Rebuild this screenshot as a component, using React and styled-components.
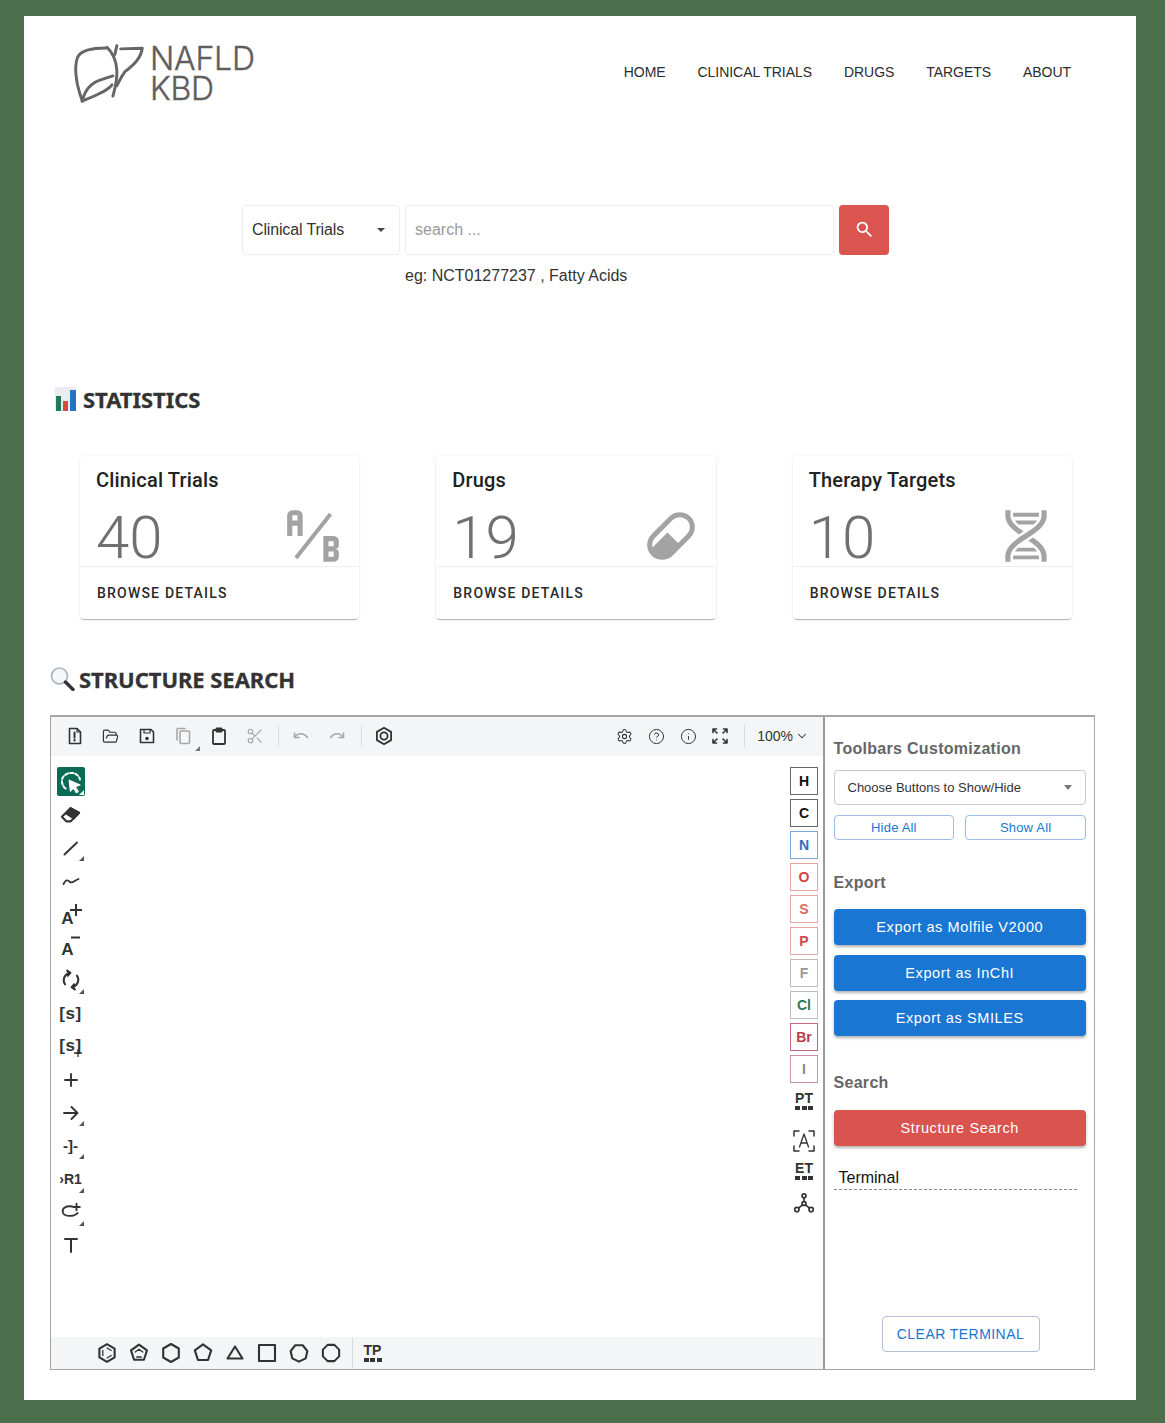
import React from "react";
import styled, { createGlobalStyle } from "styled-components";
import { Settings, CircleHelp, Info, ChevronDown, Scissors, FolderOpen } from "lucide-react";

const Global = createGlobalStyle`
  html, body { margin: 0; padding: 0; background: #4a6f4a; }
  * { box-sizing: border-box; }
  body { font-family: "Liberation Sans", Arial, sans-serif; }
`;

const Backdrop = styled.div`
  width: 1165px; height: 1423px; padding: 16px 29px 23px 24px; background: #4a6f4a;
`;
const Sheet = styled.div`
  width: 1112px; height: 1384px; background: #fff; padding-top: 29px; overflow: hidden;
`;
const Header = styled.header`
  display: flex; align-items: center; justify-content: space-between;
  height: 58px; padding: 0 65px 0 49px;
`;
const Brand = styled.div`display: flex; align-items: center; gap: 5px; color: #666;`;
const BrandText = styled.div`
  font-family: Inter, sans-serif; font-weight: 300; font-size: 32px; line-height: 30px; color: #5e5e5e;
  letter-spacing: -0.2px; -webkit-text-stroke: 0.4px #5e5e5e;
`;
const Nav = styled.nav`display: flex; gap: 32px; margin-bottom: 4px;`;
const NavLink = styled.a`font-size: 14px; line-height: 20px; color: #2c2c2c; letter-spacing: -0.05px;`;

const SearchRow = styled.div`
  display: flex; gap: 5.5px; margin: 102px 0 0 218px; height: 49.5px;
`;
const Picker = styled.div`
  width: 157.5px; display: flex; align-items: center; justify-content: space-between;
  padding: 0 14px 0 9px; border: 1.5px solid #eee; border-radius: 4px; font-size: 16px; color: #333; letter-spacing: -0.15px;
  box-shadow: 0 0 2px rgba(0,0,0,.04);
`;
const Caret = styled.span`
  width: 0; height: 0; border-left: 4.5px solid transparent; border-right: 4.5px solid transparent;
  border-top: ${p => p.$h || 4}px solid ${p => p.$c || "#444"};
`;
const SearchInput = styled.div`
  width: 428.5px; display: flex; align-items: center; padding-left: 9px;
  border: 1.5px solid #eee; border-radius: 4px; font-size: 16px; color: #9a9a9a;
  box-shadow: 0 0 2px rgba(0,0,0,.04);
`;
const SearchButton = styled.button`
  width: 50px; border: 0; border-radius: 4px; background: #da5450; color: #fff;
  display: flex; align-items: center; justify-content: center; padding: 0;
`;
const Hint = styled.div`
  margin: 11px 0 0 381px; font-size: 16px; line-height: 20px; color: #333;
`;
const SectionTitle = styled.h2`
  display: flex; align-items: center; margin: ${p => p.$top}px 0 0 ${p => p.$left}px; height: 30px;
  gap: ${p => p.$gap}px; font-family: "Noto Sans", sans-serif; font-weight: 700; font-size: 22px; color: #333;
  letter-spacing: -0.05px; -webkit-text-stroke: 0.3px #333;
`;
const CardGrid = styled.div`
  display: grid; grid-template-columns: repeat(3, 1fr); gap: 77px; margin: 42px 64px 0 56px;
`;
const Card = styled.article`
  height: 163px; border-radius: 4px; background: #fff; font-family: Roboto, sans-serif;
  box-shadow: 0 2px 1px -1px rgba(0,0,0,.22), 0 1px 2px rgba(0,0,0,.1), 0 0 3px rgba(0,0,0,.06);
`;
const CardTitle = styled.div`
  padding: 8px 16px 0; font-size: 20px; line-height: 32px; font-weight: 500; color: #222; letter-spacing: 0.17px;
`;
const CardBody = styled.div`
  height: 71px; padding: 11px 15px 0 16px; display: flex; align-items: center; justify-content: space-between;
  border-bottom: 1px solid #eee; color: #a3a3a3;
`;
const CardValue = styled.div`font-size: 60px; line-height: 60px; padding-top: 3px; font-weight: 300; color: #707070;`;
const CardFooter = styled.div`
  height: 52px; padding: 0 17px; display: flex; align-items: center; font-size: 14px; font-weight: 500;
  letter-spacing: 1.2px; color: #2a2a2a;
`;

const Frame = styled.section`
  display: grid; grid-template-columns: 774px 1fr; height: 655px; margin: 21px 41.5px 0 26px;
  border: 1.5px solid #a6a6a6; border-top-width: 2px;
`;
const Editor = styled.div`
  display: flex; flex-direction: column; border-right: 2px solid #9a9a9a; min-width: 0;
`;
const TopBar = styled.div`
  height: 39.5px; flex: none; display: flex; align-items: center; padding: 0 14px 0 5.5px; background: #f4f5f6; color: #333;
`;
const TopButton = styled.span`
  position: relative; width: ${p => p.$w || 36}px; height: 32px; display: flex; align-items: center; justify-content: center;
  color: ${p => p.$dim ? "#a8a8a8" : "#333"};
`;
const Rule = styled.span`
  width: 1px; height: ${p => p.$h || 22}px; background: #d8dadc; margin: 0 ${p => p.$r}px 0 ${p => p.$l}px; flex: none;
`;
const Push = styled.span`flex: 1;`;
const Zoom = styled.span`
  display: flex; align-items: center; gap: 2px; font-size: 14px; color: #333;
`;
const Canvas = styled.div`flex: 1; display: flex; justify-content: space-between; padding: 11px 5px 0 5.5px;`;
const LeftRail = styled.div`display: flex; flex-direction: column; gap: 4.14px;`;
const Tool = styled.span`
  position: relative; width: 28px; height: 29px; display: flex; align-items: center; justify-content: center;
  border-radius: 2px; color: ${p => p.$on ? "#fff" : "#333"}; background: ${p => p.$on ? "#0b6b56" : "transparent"};
`;
const Corner = styled.i`
  position: absolute; right: 1px; bottom: 1px; width: 0; height: 0;
  border-left: 5px solid transparent; border-bottom: 5px solid ${p => p.$c || "#555"};
`;
const ToolText = styled.span`
  font-weight: 700; font-size: ${p => p.$s || 15}px; line-height: 1; color: #333; white-space: nowrap;
  letter-spacing: ${p => p.$sp || 0}px; transform: translate(${p => p.$dx || 0}px, ${p => p.$dy || 0}px);
`;
const Mark = styled.svg`
  position: absolute; left: ${p => p.$x}px; top: ${p => p.$y}px; stroke: #333; stroke-width: 2; fill: none;
`;
const RightRail = styled.div`display: flex; flex-direction: column; gap: 4px; width: 28px;`;
const Atom = styled.span`
  width: 28px; height: 28px; display: flex; align-items: center; justify-content: center;
  border: 1.5px solid ${p => p.$line}; font-size: 14px; font-weight: 700; color: ${p => p.$ink};
`;
const Table = styled.span`
  width: 28px; height: 28px; margin-top: ${p => p.$mt || 0}px; display: flex; flex-direction: column; align-items: center; justify-content: center;
  font-size: 14px; font-weight: 700; line-height: 12px; color: #333;
`;
const Dots = styled.span`display: flex; gap: 1.5px; margin-top: 2px;`;
const Dot = styled.i`width: 5px; height: 4px; background: #333;`;
const Slot = styled.span`
  width: 28px; height: 28px; margin-top: ${p => p.$mt || 0}px; display: flex; align-items: center; justify-content: center; color: #333;
`;
const BottomBar = styled.div`
  height: 32px; flex: none; display: flex; align-items: center; padding-left: 39.5px; background: #f4f5f6; color: #333;
`;
const Shape = styled.span`width: 32px; height: 32px; display: flex; align-items: center; justify-content: center;`;

const Panel = styled.aside`
  display: flex; flex-direction: column; padding: 22px 7.5px 17px 8.5px; min-width: 0;
`;
const PanelHead = styled.h3`
  margin: ${p => p.$top}px 0 0; font-size: 16px; line-height: 20px; font-weight: 700; color: #666; letter-spacing: .3px;
`;
const PanelSelect = styled.div`
  margin-top: 11px; height: 35px; padding: 0 13px; display: flex; align-items: center; justify-content: space-between;
  border: 1px solid #c9c9c9; border-radius: 4px; font-size: 13px; color: #333;
`;
const Pair = styled.div`display: grid; grid-template-columns: 1fr 1fr; gap: 11px; margin-top: 10px;`;
const Ghost = styled.button`
  height: 25px; padding: 0; background: #fff; border: 1px solid #9dbde2; border-radius: 4px;
  font: 13px "Liberation Sans", sans-serif; color: #1976d2; letter-spacing: .2px;
`;
const Solid = styled.button`
  height: 36px; padding: 0; margin-top: ${p => p.$top}px; border: 0; border-radius: 4px; background: ${p => p.$bg};
  box-shadow: 0 2px 3px rgba(0,0,0,.3); color: #fff; font: 14.5px "Liberation Sans", sans-serif; letter-spacing: .6px;
`;
const Terminal = styled.div`
  margin: 22px 9px 0 0; padding: 0 0 1px 5px; border-bottom: 1px dashed #8a8a8a; font-size: 16px; line-height: 20px; color: #111;
`;
const Clear = styled.button`
  margin: auto 0 0 48px; width: 158px; height: 36px; padding: 0; background: #fff; border: 1px solid #b3c0d8; border-radius: 4px;
  font: 14px "Liberation Sans", sans-serif; color: #1976d2; letter-spacing: .45px;
`;
const Glyph = styled.svg`
  display: block; fill: none; stroke: currentColor; stroke-width: ${p => p.$w || 1.6}; stroke-linecap: round; stroke-linejoin: round; flex: none;
`;
const Mono = styled.svg`display: block; fill: currentColor; flex: none;`;

const G = ({ s = 20, w, children }) => <Glyph width={s} height={s} viewBox="0 0 20 20" $w={w}>{children}</Glyph>;
const PlusMark = ({ x, y, s = 12 }) => (
  <Mark $x={x} $y={y} width={s} height={s} viewBox="0 0 12 12"><path d="M6 0V12M0 6H12" /></Mark>
);
const MinusMark = ({ x, y }) => (
  <Mark $x={x} $y={y} width="9" height="3" viewBox="0 0 9 3"><path d="M0 1.5H9" /></Mark>
);

const Logo = () => (
  <Glyph width="72" height="60" viewBox="216 130 220 184" $w={9}>
    <path d="M318 142C280 142 240 148 230 170C218 200 226 250 236 280L244 305" />
    <path d="M244 305C252 270 270 250 300 240L338 228" />
    <path d="M244 305C280 290 320 275 335 255" />
    <path d="M320 140C335 155 348 180 350 210C352 240 345 265 338 290" />
    <path d="M350 135L344 162" />
    <path d="M362 145L428 143C424 175 400 195 375 215C360 235 355 250 350 258" />
  </Glyph>
);
const Chart = () => (
  <svg width="21" height="24" viewBox="0 0 21 24">
    <rect width="21" height="24" fill="#e9edf1" />
    <rect x="1" y="9" width="5" height="15" fill="#1f7a57" />
    <rect x="8" y="14" width="5" height="10" fill="#d8483f" />
    <rect x="15" y="3" width="6" height="21" fill="#2673c2" />
  </svg>
);
const Lens = () => (
  <svg width="25" height="24" viewBox="0 0 25 24">
    <circle cx="9.5" cy="9" r="8" fill="#f3f7fa" stroke="#a9b3ba" strokeWidth="1.6" />
    <path d="M15.5 15L23 22.5" stroke="#333" strokeWidth="3.4" strokeLinecap="round" />
  </svg>
);
const Magnify = () => (
  <Mono width="21" height="21" viewBox="0 0 24 24">
    <path d="M9.5,3A6.5,6.5 0 0,1 16,9.5C16,11.11 15.41,12.59 14.44,13.73L14.71,14H15.5L20.5,19L19,20.5L14,15.5V14.71L13.73,14.44C12.59,15.41 11.11,16 9.5,16A6.5,6.5 0 0,1 3,9.5A6.5,6.5 0 0,1 9.5,3M9.5,5C7,5 5,7 5,9.5C5,12 7,14 9.5,14C12,14 14,12 14,9.5C14,7 12,5 9.5,5Z" />
  </Mono>
);
const AB = () => (
  <Mono width="62" height="62" viewBox="0 0 24 24">
    <path d="M4 2A2 2 0 0 0 2 4V12H4V8H6V12H8V4A2 2 0 0 0 6 2H4M4 4H6V6H4M16 12V22H20A2 2 0 0 0 22 20V18.5A1.5 1.5 0 0 0 20.5 17A1.5 1.5 0 0 0 22 15.5V14A2 2 0 0 0 20 12H16M18 14H20V16H18M18 18H20V20H18ZM18.2 3L19.4 4L6 21L4.8 20Z" />
  </Mono>
);
const Pill = () => (
  <Mono width="60" height="60" viewBox="0 0 24 24">
    <path d="M4.22,11.29L11.29,4.22C13.64,1.88 17.43,1.88 19.78,4.22C22.12,6.56 22.12,10.36 19.78,12.71L12.71,19.78C10.36,22.12 6.56,22.12 4.22,19.78C1.88,17.43 1.88,13.64 4.22,11.29M5.64,12.71C4.59,13.75 4.24,15.24 4.6,16.57L10.59,10.59L14.83,14.83L18.36,11.29C19.93,9.73 19.93,7.2 18.36,5.64C16.8,4.07 14.27,4.07 12.71,5.64L5.64,12.71Z" />
  </Mono>
);
const Dna = () => (
  <Mono width="62" height="62" viewBox="0 0 24 24">
    <path d="M4,2H6V4C6,5.44 6.68,6.61 7.88,7.78C8.74,8.61 9.89,9.41 11.09,10.2L9.26,11.39C8.27,10.72 7.31,10 6.5,9.21C5.07,7.82 4,6.1 4,4V2M18,2H20V4C20,6.1 18.93,7.82 17.5,9.21C16.09,10.59 14.29,11.73 12.54,12.84C10.79,13.96 9.09,15.05 7.88,16.22C6.68,17.39 6,18.56 6,20V22H4V20C4,17.9 5.07,16.18 6.5,14.79C7.91,13.41 9.71,12.27 11.46,11.16C13.21,10.04 14.91,8.95 16.12,7.78C17.32,6.61 18,5.44 18,4V2M14.74,12.61C15.73,13.28 16.69,14 17.5,14.79C18.93,16.18 20,17.9 20,20V22H18V20C18,18.56 17.32,17.39 16.12,16.22C15.26,15.39 14.11,14.59 12.91,13.8L14.74,12.61M7,3H17V4L16.94,4.5H7.06L7,4V3M7.68,6H16.32C16.08,6.34 15.8,6.69 15.42,7.06L14.91,7.5H9.07L8.56,7.06C8.2,6.69 7.92,6.34 7.68,6M9.09,16.5H14.93L15.44,16.94C15.8,17.31 16.08,17.66 16.32,18H7.68C7.92,17.66 8.2,17.31 8.56,16.94L9.09,16.5M7.06,19.5H16.94L17,20V21H7V20L7.06,19.5Z" />
  </Mono>
);

const poly = (n, r, rot = -90, c = 10) =>
  Array.from({ length: n }, (_, i) => {
    const a = ((rot + (360 / n) * i) * Math.PI) / 180;
    return `${(c + r * Math.cos(a)).toFixed(2)},${(c + r * Math.sin(a)).toFixed(2)}`;
  }).join(" ");

const shapes = [
  <G w={2.1}><polygon points={poly(6, 8.8)} /><path d="M5.8 7.5V12.5M14.2 7.5L10 5M14.2 12.5L10 15" strokeWidth="1.3" /></G>,
  <G w={2.1}><polygon points={poly(5, 8.4)} /><path d="M6.2 9L10 6.2L13.8 9M7.7 14H12.3" strokeWidth="1.3" /></G>,
  <G w={2.1}><polygon points={poly(6, 9)} /></G>,
  <G w={2.1}><polygon points={poly(5, 8.6)} /></G>,
  <G w={2.1}><polygon points="10,3.5 17.5,15.5 2.5,15.5" /></G>,
  <G w={2.1}><rect x="2" y="2" width="16" height="16" /></G>,
  <G w={2.1}><polygon points={poly(7, 8.6, 90)} /></G>,
  <G w={2.1}><polygon points={poly(8, 8.8, 22.5)} /></G>,
];

const atoms = [
  ["H", "#666", "#111"], ["C", "#666", "#111"], ["N", "#7fa8e2", "#2f6fc4"], ["O", "#e9a5a0", "#cf4540"],
  ["S", "#e9a9a0", "#d96a5c"], ["P", "#e9a5a0", "#d24a4a"], ["F", "#bdbdbd", "#999"], ["Cl", "#bdbdbd", "#2c7a5a"],
  ["Br", "#c9677a", "#b93d45"], ["I", "#cf8fae", "#888"],
];

const stats = [
  ["Clinical Trials", "40", <AB />],
  ["Drugs", "19", <Pill />],
  ["Therapy Targets", "10", <Dna />],
];

export default function App() {
  return (
    <Backdrop>
      <Global />
      <Sheet>
        <Header>
          <Brand>
            <Logo />
            <BrandText>NAFLD<br />KBD</BrandText>
          </Brand>
          <Nav>
            {["HOME", "CLINICAL TRIALS", "DRUGS", "TARGETS", "ABOUT"].map(t => <NavLink key={t}>{t}</NavLink>)}
          </Nav>
        </Header>

        <SearchRow>
          <Picker>Clinical Trials<Caret /></Picker>
          <SearchInput>search ...</SearchInput>
          <SearchButton><Magnify /></SearchButton>
        </SearchRow>
        <Hint>eg: NCT01277237 , Fatty Acids</Hint>

        <SectionTitle $top={98} $left={31} $gap={7}><Chart />STATISTICS</SectionTitle>
        <CardGrid>
          {stats.map(([title, value, icon]) => (
            <Card key={title}>
              <CardTitle>{title}</CardTitle>
              <CardBody><CardValue>{value}</CardValue>{icon}</CardBody>
              <CardFooter>BROWSE DETAILS</CardFooter>
            </Card>
          ))}
        </CardGrid>

        <SectionTitle $top={45} $left={26} $gap={4}><Lens />STRUCTURE SEARCH</SectionTitle>
        <Frame>
          <Editor>
            <TopBar>
              <TopButton><G><path d="M4.5 2.5H12L15.5 6V17.5H4.5Z" /><path d="M12 2.5V6H15.5" strokeWidth="1.2" /><path d="M9.5 6.5V11.5M9.5 13.8V14.4" strokeWidth="2" /></G></TopButton>
              <TopButton><FolderOpen size={17} strokeWidth={1.7} /></TopButton>
              <TopButton><G><path d="M3.5 3.5H14L16.5 6V16.5H3.5Z" /><path d="M7 3.5V7H13V3.5" strokeWidth="1.2" /><circle cx="10" cy="12.5" r="1" fill="currentColor" /></G></TopButton>
              <TopButton $dim><G><rect x="7" y="5" width="9.5" height="12.5" rx="1" /><path d="M4 14V3.5A1 1 0 0 1 5 2.5H12" /></G><Corner $c="#777" /></TopButton>
              <TopButton><G w={1.8}><rect x="4" y="4" width="12" height="14" rx="1" /><path d="M7.5 2.5H12.5V5.5H7.5Z" fill="currentColor" /></G></TopButton>
              <TopButton $dim><Scissors size={18} strokeWidth={1.6} /></TopButton>
              <Rule $l={5} $r={4} />
              <TopButton $dim><G><path d="M3.5 7V11.5H8" /><path d="M3.5 11.5C7 6.5 12.5 6.5 16.5 11.5" /></G></TopButton>
              <TopButton $dim><G><path d="M16.5 7V11.5H12" /><path d="M16.5 11.5C13 6.5 7.5 6.5 3.5 11.5" /></G></TopButton>
              <Rule $l={6} $r={4} />
              <TopButton><G w={1.8}><polygon points={poly(6, 8.2)} /><circle cx="10" cy="10" r="3.6" /></G></TopButton>
              <Push />
              <TopButton $w={32}><Settings size={17} strokeWidth={1.5} /></TopButton>
              <TopButton $w={32}><CircleHelp size={17} strokeWidth={1.4} /></TopButton>
              <TopButton $w={32}><Info size={17} strokeWidth={1.4} /></TopButton>
              <TopButton $w={32}><G><path d="M3 3L7 7M3 3H6.5M3 3V6.5M17 3L13 7M17 3H13.5M17 3V6.5M3 17L7 13M3 17H6.5M3 17V13.5M17 17L13 13M17 17H13.5M17 17V13.5" strokeWidth="1.6" /></G></TopButton>
              <Rule $l={8} $r={12} />
              <Zoom>100%<ChevronDown size={14} strokeWidth={1.8} /></Zoom>
            </TopBar>

            <Canvas>
              <LeftRail>
                <Tool $on>
                  <G s={24} w={1.7}><path d="M5.5 15.5C1.5 12 1.5 6.5 5 4.2C9 1 16 2 17.5 8" strokeDasharray="2.6 1.8" /><path d="M8.5 8.5L17.5 12.5L13.6 14L16 18L14.5 18.8L12 15L9.5 17.5Z" fill="#fff" strokeWidth="1" /></G>
                  <Corner $c="#fff" />
                </Tool>
                <Tool><G s={23}><path d="M2.5 12L10 4.5L17.5 8.5L10 16H6.5Z" strokeWidth="1.8" /><path d="M10 4.5L17.5 8.5L12.8 13.5L5.8 8.8Z" fill="currentColor" /></G></Tool>
                <Tool><G w={1.9}><path d="M3.5 16.5L16 4.5" /></G><Corner /></Tool>
                <Tool><G w={1.8}><path d="M2.5 13C5 8 7 9 9 11C11 13 14 9 17.5 8" /></G></Tool>
                <Tool><ToolText $s={17} $dx={-3} $dy={4}>A</ToolText><PlusMark x={13} y={4} /></Tool>
                <Tool><ToolText $s={17} $dx={-3} $dy={2}>A</ToolText><MinusMark x={14} y={3.5} /></Tool>
                <Tool><G s={22} w={1.8}><path d="M4.6 14A6.6 6.6 0 0 1 8 3.9" /><path d="M15.4 6A6.6 6.6 0 0 1 12 16.1" /><path d="M6.5 1.5L9.5 3.5L7 6.2M13.5 18.5L10.5 16.5L13 13.8" fill="currentColor" /></G><Corner /></Tool>
                <Tool><ToolText $s={17} $sp={0.5}>[s]</ToolText></Tool>
                <Tool><ToolText $s={17} $sp={0.5} $dy={-1}>[s]</ToolText><PlusMark x={17} y={17} s={8} /></Tool>
                <Tool><G w={1.9}><path d="M10 4V16M4 10H16" /></G></Tool>
                <Tool><G w={1.9}><path d="M3 10H16.5M10.5 4L16.5 10L10.5 16" /></G><Corner /></Tool>
                <Tool><ToolText $s={15}>-]-</ToolText><Corner /></Tool>
                <Tool><ToolText $s={14}>›R1</ToolText><Corner /></Tool>
                <Tool><G s={22} w={1.7}><path d="M11 5C5 4 2 7 2.5 10C3 14 12 15 16 11" /><path d="M15 2.5V8.5M12 5.5H18" /></G><Corner /></Tool>
                <Tool><G w={2}><path d="M4 4H16M10 4V17" /></G></Tool>
              </LeftRail>
              <RightRail>
                {atoms.map(([a, l, c]) => <Atom key={a} $line={l} $ink={c}>{a}</Atom>)}
                <Table>PT<Dots><Dot /><Dot /><Dot /></Dots></Table>
                <Slot $mt={8}>
                  <Glyph width="24" height="24" viewBox="0 0 24 24" $w={1.5}><path d="M7 2H2V7M17 2H22V7M7 22H2V17M17 22H22V17" /><path d="M7.5 18L12 5L16.5 18M9 14H15" strokeWidth="1.3" /></Glyph>
                </Slot>
                <Table $mt={-2}>ET<Dots><Dot /><Dot /><Dot /></Dots></Table>
                <Slot>
                  <G w={1.5} s={22}><circle cx="10" cy="3.5" r="1.8" /><circle cx="10" cy="10.5" r="1.8" /><circle cx="3.5" cy="16" r="2" /><circle cx="16.5" cy="16" r="2" /><path d="M10 5.3V8.7M8.6 11.7L5 14.7M11.4 11.7L15 14.7" /></G>
                </Slot>
              </RightRail>
            </Canvas>

            <BottomBar>
              {shapes.map((s, i) => <Shape key={i}>{s}</Shape>)}
              <Rule $l={5} $r={6} $h={30} />
              <Table>TP<Dots><Dot /><Dot /><Dot /></Dots></Table>
            </BottomBar>
          </Editor>

          <Panel>
            <PanelHead $top={0}>Toolbars Customization</PanelHead>
            <PanelSelect>Choose Buttons to Show/Hide<Caret $c="#777" $h={5} /></PanelSelect>
            <Pair><Ghost>Hide All</Ghost><Ghost>Show All</Ghost></Pair>
            <PanelHead $top={33}>Export</PanelHead>
            <Solid $top={16.5} $bg="#1976d2">Export as Molfile V2000</Solid>
            <Solid $top={9.5} $bg="#1976d2">Export as InChI</Solid>
            <Solid $top={9.5} $bg="#1976d2">Export as SMILES</Solid>
            <PanelHead $top={36.5}>Search</PanelHead>
            <Solid $top={17} $bg="#d9534f">Structure Search</Solid>
            <Terminal>Terminal</Terminal>
            <Clear>CLEAR TERMINAL</Clear>
          </Panel>
        </Frame>
      </Sheet>
    </Backdrop>
  );
}
